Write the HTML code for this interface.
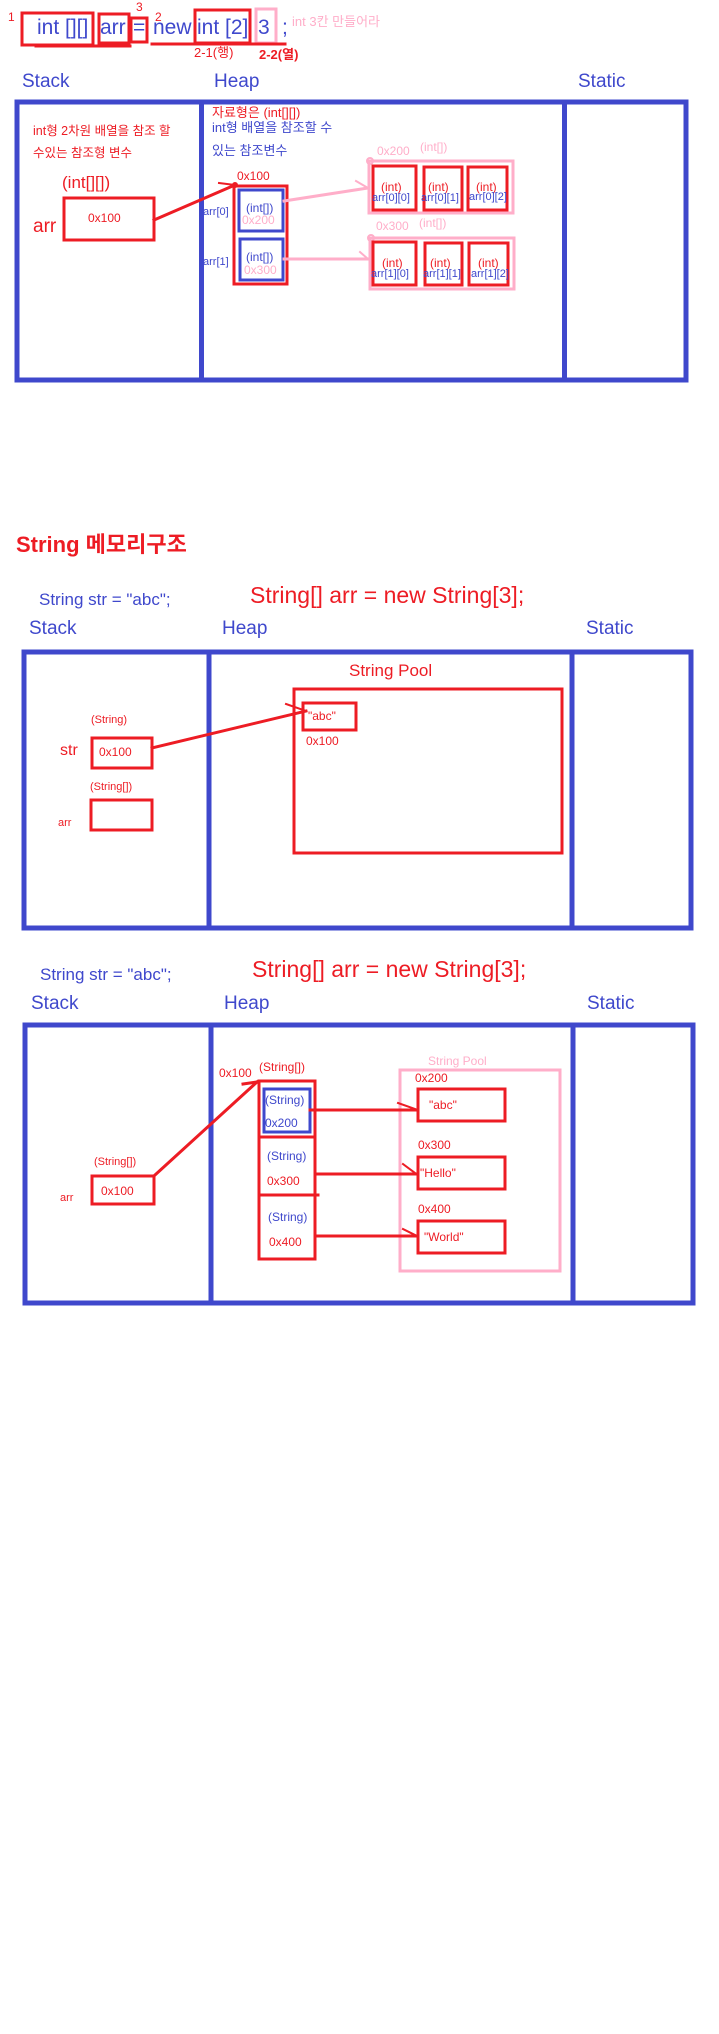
<!DOCTYPE html>
<html><head><meta charset="utf-8"><style>
body{margin:0;background:#fff;}
#p{position:relative;width:719px;height:2034px;overflow:hidden;background:#fff;font-family:"Liberation Sans","Noto Sans CJK KR",sans-serif;}
.t{position:absolute;white-space:nowrap;line-height:1;}
.r{color:#ed1c24}.b{color:#3f48cc}.k{color:#ffaec9}
.bx{position:absolute;box-sizing:border-box;}
svg{position:absolute;left:0;top:0;}
</style></head><body><div id="p">
<svg width="719" height="2034">
<g fill="none" stroke-linecap="square">
<!-- section 1 -->
<rect x="17" y="102" width="669" height="278" stroke="#3f48cc" stroke-width="5"/>
<line x1="201.5" y1="102" x2="201.5" y2="380" stroke="#3f48cc" stroke-width="5"/>
<line x1="564.5" y1="102" x2="564.5" y2="380" stroke="#3f48cc" stroke-width="5"/>
<rect x="22" y="13" width="71" height="32" stroke="#ed1c24" stroke-width="3"/>
<rect x="99" y="14" width="30" height="29" stroke="#ed1c24" stroke-width="3"/>
<rect x="131" y="18" width="16" height="24" stroke="#ed1c24" stroke-width="3"/>
<rect x="195" y="10" width="55" height="33" stroke="#ed1c24" stroke-width="3"/>
<rect x="256" y="9" width="20" height="34" stroke="#ffaec9" stroke-width="3"/>
<line x1="36" y1="46" x2="130" y2="46" stroke="#ed1c24" stroke-width="3"/>
<line x1="152" y1="44" x2="285" y2="44" stroke="#ed1c24" stroke-width="3"/>
<rect x="64" y="198" width="90" height="42" stroke="#ed1c24" stroke-width="3"/>
<line x1="154" y1="220" x2="235" y2="185" stroke="#ed1c24" stroke-width="3"/>
<line x1="219" y1="183" x2="235" y2="185" stroke="#ed1c24" stroke-width="2"/>
<circle cx="235" cy="185" r="3" fill="#ed1c24" stroke="none"/>
<rect x="234" y="186" width="53" height="98" stroke="#ed1c24" stroke-width="3"/>
<rect x="239" y="190" width="44" height="41" stroke="#3f48cc" stroke-width="3"/>
<rect x="240" y="239" width="43" height="41" stroke="#3f48cc" stroke-width="3"/>
<line x1="284" y1="201" x2="368" y2="188" stroke="#ffaec9" stroke-width="3"/>
<line x1="356" y1="181" x2="368" y2="188" stroke="#ffaec9" stroke-width="2"/>
<line x1="284" y1="259" x2="368" y2="259" stroke="#ffaec9" stroke-width="3"/>
<line x1="360" y1="252" x2="368" y2="259" stroke="#ffaec9" stroke-width="2"/>
<rect x="369" y="161" width="144" height="52" stroke="#ffaec9" stroke-width="3"/>
<rect x="370" y="238" width="144" height="51" stroke="#ffaec9" stroke-width="3"/>
<circle cx="370" cy="161" r="3" stroke="#ffaec9" stroke-width="2"/>
<circle cx="371" cy="238" r="3" stroke="#ffaec9" stroke-width="2"/>
<rect x="373" y="166" width="43" height="44" stroke="#ed1c24" stroke-width="3"/>
<rect x="424" y="167" width="38" height="43" stroke="#ed1c24" stroke-width="3"/>
<rect x="468" y="167" width="39" height="43" stroke="#ed1c24" stroke-width="3"/>
<rect x="373" y="242" width="43" height="43" stroke="#ed1c24" stroke-width="3"/>
<rect x="425" y="243" width="37" height="42" stroke="#ed1c24" stroke-width="3"/>
<rect x="469" y="243" width="39" height="42" stroke="#ed1c24" stroke-width="3"/>
<!-- section 2 -->
<rect x="24" y="652" width="667" height="276" stroke="#3f48cc" stroke-width="5"/>
<line x1="209" y1="652" x2="209" y2="928" stroke="#3f48cc" stroke-width="5"/>
<line x1="572" y1="652" x2="572" y2="928" stroke="#3f48cc" stroke-width="5"/>
<rect x="294" y="689" width="268" height="164" stroke="#ed1c24" stroke-width="3"/>
<rect x="303" y="703" width="53" height="27" stroke="#ed1c24" stroke-width="3"/>
<rect x="92" y="738" width="60" height="30" stroke="#ed1c24" stroke-width="3"/>
<rect x="91" y="800" width="61" height="30" stroke="#ed1c24" stroke-width="3"/>
<line x1="152" y1="748" x2="306" y2="711" stroke="#ed1c24" stroke-width="3"/>
<line x1="286" y1="704" x2="306" y2="711" stroke="#ed1c24" stroke-width="2"/>
<!-- section 3 -->
<rect x="25" y="1025" width="668" height="278" stroke="#3f48cc" stroke-width="5"/>
<line x1="211" y1="1025" x2="211" y2="1303" stroke="#3f48cc" stroke-width="5"/>
<line x1="573" y1="1025" x2="573" y2="1303" stroke="#3f48cc" stroke-width="5"/>
<rect x="400" y="1070" width="160" height="201" stroke="#ffaec9" stroke-width="3"/>
<rect x="259" y="1081" width="56" height="178" stroke="#ed1c24" stroke-width="3"/>
<line x1="259" y1="1137" x2="315" y2="1137" stroke="#ed1c24" stroke-width="3"/>
<line x1="259" y1="1195" x2="318" y2="1195" stroke="#ed1c24" stroke-width="3"/>
<rect x="264" y="1089" width="46" height="43" stroke="#3f48cc" stroke-width="3"/>
<rect x="418" y="1089" width="87" height="32" stroke="#ed1c24" stroke-width="3"/>
<rect x="418" y="1157" width="87" height="32" stroke="#ed1c24" stroke-width="3"/>
<rect x="418" y="1221" width="87" height="32" stroke="#ed1c24" stroke-width="3"/>
<line x1="310" y1="1110" x2="417" y2="1110" stroke="#ed1c24" stroke-width="3"/>
<line x1="315" y1="1174" x2="417" y2="1174" stroke="#ed1c24" stroke-width="3"/>
<line x1="315" y1="1236" x2="417" y2="1236" stroke="#ed1c24" stroke-width="3"/>
<line x1="398" y1="1103" x2="415" y2="1109" stroke="#ed1c24" stroke-width="2"/>
<line x1="403" y1="1164" x2="415" y2="1173" stroke="#ed1c24" stroke-width="2"/>
<line x1="403" y1="1229" x2="415" y2="1235" stroke="#ed1c24" stroke-width="2"/>
<rect x="92" y="1176" width="62" height="28" stroke="#ed1c24" stroke-width="3"/>
<line x1="155" y1="1175" x2="257" y2="1082" stroke="#ed1c24" stroke-width="3"/>
<line x1="243" y1="1084" x2="257" y2="1082" stroke="#ed1c24" stroke-width="3"/>
</g></svg>

<!-- section 1 text -->
<div class="t r" style="left:8px;top:11px;font-size:12px">1</div>
<div class="t b" style="left:37px;top:17px;font-size:21px">int [][]</div>
<div class="t b" style="left:100px;top:17px;font-size:21px">arr</div>
<div class="t b" style="left:133px;top:17px;font-size:21px">=</div>
<div class="t r" style="left:136px;top:1px;font-size:12px">3</div>
<div class="t r" style="left:155px;top:11px;font-size:12px">2</div>
<div class="t b" style="left:153px;top:17px;font-size:21px">new</div>
<div class="t b" style="left:197px;top:17px;font-size:21px">int [2]</div>
<div class="t b" style="left:258px;top:17px;font-size:21px">3</div>
<div class="t b" style="left:282px;top:17px;font-size:21px">;</div>
<div class="t k" style="left:292px;top:15px;font-size:13px">int 3칸 만들어라</div>
<div class="t r" style="left:194px;top:46px;font-size:13px">2-1(행)</div>
<div class="t r" style="left:259px;top:48px;font-size:13px;font-weight:bold">2-2(열)</div>
<div class="t b" style="left:22px;top:72px;font-size:19px">Stack</div>
<div class="t b" style="left:214px;top:72px;font-size:19px">Heap</div>
<div class="t b" style="left:578px;top:72px;font-size:19px">Static</div>
<div class="t r" style="left:33px;top:125px;font-size:12.5px">int형 2차원 배열을 참조 할</div>
<div class="t r" style="left:33px;top:147px;font-size:12.5px">수있는 참조형 변수</div>
<div class="t r" style="left:62px;top:174px;font-size:17px">(int[][])</div>
<div class="t r" style="left:33px;top:217px;font-size:19px">arr</div>
<div class="t r" style="left:88px;top:212px;font-size:12px">0x100</div>
<div class="t r" style="left:212px;top:106px;font-size:13px">자료형은 (int[][])</div>
<div class="t b" style="left:212px;top:121px;font-size:13px">int형 배열을 참조할 수</div>
<div class="t b" style="left:212px;top:144px;font-size:13px">있는 참조변수</div>
<div class="t r" style="left:237px;top:170px;font-size:12px">0x100</div>
<div class="t b" style="left:203px;top:207px;font-size:11px">arr[0]</div>
<div class="t b" style="left:203px;top:257px;font-size:11px">arr[1]</div>
<div class="t b" style="left:246px;top:202px;font-size:12px">(int[])</div>
<div class="t k" style="left:242px;top:214px;font-size:12px">0x200</div>
<div class="t b" style="left:246px;top:251px;font-size:12px">(int[])</div>
<div class="t k" style="left:244px;top:264px;font-size:12px">0x300</div>
<div class="t k" style="left:377px;top:145px;font-size:12px">0x200</div>
<div class="t k" style="left:420px;top:141px;font-size:12px">(int[])</div>
<div class="t k" style="left:376px;top:220px;font-size:12px">0x300</div>
<div class="t k" style="left:419px;top:217px;font-size:12px">(int[])</div>
<div class="t r" style="left:381px;top:181px;font-size:12px">(int)</div>
<div class="t r" style="left:428px;top:181px;font-size:12px">(int)</div>
<div class="t r" style="left:476px;top:181px;font-size:12px">(int)</div>
<div class="t b" style="left:372px;top:193px;font-size:11px">arr[0][0]</div>
<div class="t b" style="left:421px;top:193px;font-size:11px">arr[0][1]</div>
<div class="t b" style="left:469px;top:192px;font-size:11px">arr[0][2]</div>
<div class="t r" style="left:382px;top:257px;font-size:12px">(int)</div>
<div class="t r" style="left:430px;top:257px;font-size:12px">(int)</div>
<div class="t r" style="left:478px;top:257px;font-size:12px">(int)</div>
<div class="t b" style="left:371px;top:269px;font-size:11px">arr[1][0]</div>
<div class="t b" style="left:423px;top:269px;font-size:11px">arr[1][1]</div>
<div class="t b" style="left:471px;top:269px;font-size:11px">arr[1][2]</div>

<!-- section 2 text -->
<div class="t r" style="left:16px;top:534px;font-size:22px;font-weight:bold">String 메모리구조</div>
<div class="t b" style="left:39px;top:591px;font-size:17px">String str = "abc";</div>
<div class="t r" style="left:250px;top:584px;font-size:23px">String[] arr = new String[3];</div>
<div class="t b" style="left:29px;top:619px;font-size:19px">Stack</div>
<div class="t b" style="left:222px;top:619px;font-size:19px">Heap</div>
<div class="t b" style="left:586px;top:619px;font-size:19px">Static</div>
<div class="t r" style="left:349px;top:662px;font-size:17px">String Pool</div>
<div class="t r" style="left:308px;top:710px;font-size:12px">"abc"</div>
<div class="t r" style="left:306px;top:735px;font-size:12px">0x100</div>
<div class="t r" style="left:91px;top:715px;font-size:11px">(String)</div>
<div class="t r" style="left:60px;top:743px;font-size:16px">str</div>
<div class="t r" style="left:99px;top:746px;font-size:12px">0x100</div>
<div class="t r" style="left:90px;top:782px;font-size:11px">(String[])</div>
<div class="t r" style="left:58px;top:818px;font-size:11px">arr</div>

<!-- section 3 text -->
<div class="t b" style="left:40px;top:966px;font-size:17px">String str = "abc";</div>
<div class="t r" style="left:252px;top:958px;font-size:23px">String[] arr = new String[3];</div>
<div class="t b" style="left:31px;top:994px;font-size:19px">Stack</div>
<div class="t b" style="left:224px;top:994px;font-size:19px">Heap</div>
<div class="t b" style="left:587px;top:994px;font-size:19px">Static</div>
<div class="t k" style="left:428px;top:1055px;font-size:12px">String Pool</div>
<div class="t r" style="left:219px;top:1067px;font-size:12px">0x100</div>
<div class="t r" style="left:259px;top:1061px;font-size:12px">(String[])</div>
<div class="t b" style="left:265px;top:1094px;font-size:12px">(String)</div>
<div class="t b" style="left:265px;top:1117px;font-size:12px">0x200</div>
<div class="t b" style="left:267px;top:1150px;font-size:12px">(String)</div>
<div class="t r" style="left:267px;top:1175px;font-size:12px">0x300</div>
<div class="t b" style="left:268px;top:1211px;font-size:12px">(String)</div>
<div class="t r" style="left:269px;top:1236px;font-size:12px">0x400</div>
<div class="t r" style="left:415px;top:1072px;font-size:12px">0x200</div>
<div class="t r" style="left:418px;top:1139px;font-size:12px">0x300</div>
<div class="t r" style="left:418px;top:1203px;font-size:12px">0x400</div>
<div class="t r" style="left:429px;top:1099px;font-size:12px">"abc"</div>
<div class="t r" style="left:420px;top:1167px;font-size:12px">"Hello"</div>
<div class="t r" style="left:424px;top:1231px;font-size:12px">"World"</div>
<div class="t r" style="left:94px;top:1157px;font-size:11px">(String[])</div>
<div class="t r" style="left:101px;top:1185px;font-size:12px">0x100</div>
<div class="t r" style="left:60px;top:1193px;font-size:11px">arr</div>
</div></body></html>
